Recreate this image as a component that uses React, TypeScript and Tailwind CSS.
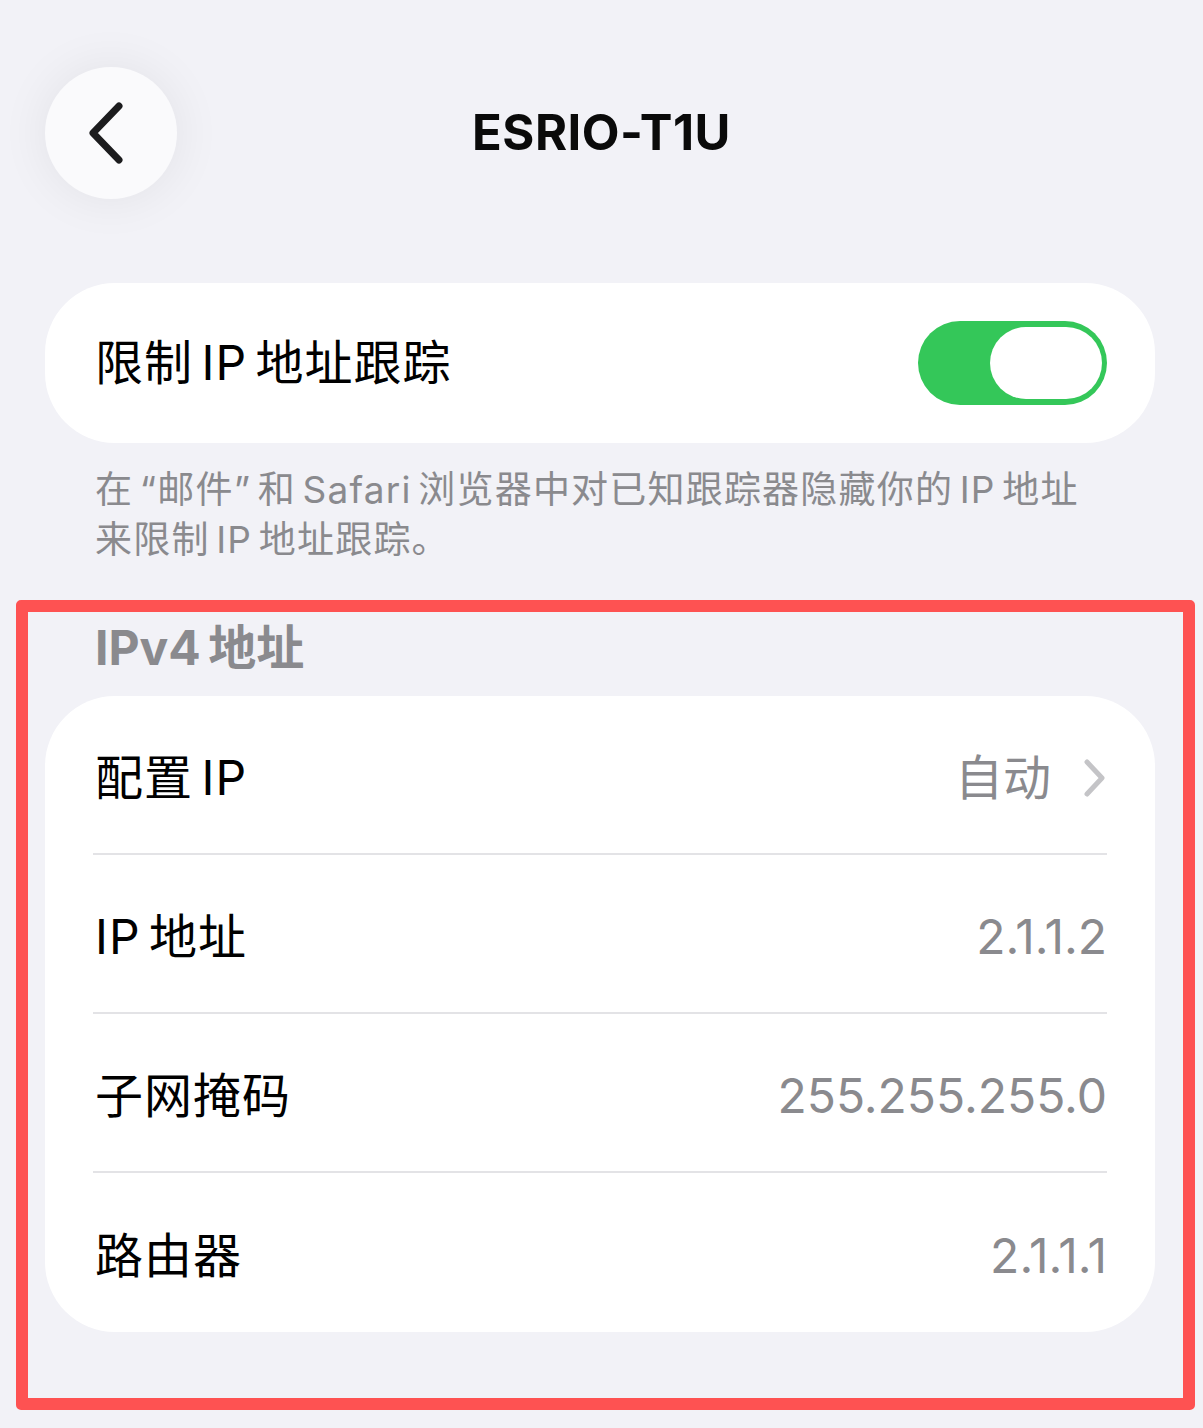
import React from 'react';

const font = { fontFamily: '"Inter", "Noto Sans CJK SC", sans-serif' };

const rows = [
  { label: '配置 IP', value: '自动', chevron: true },
  { label: 'IP 地址', value: '2.1.1.2' },
  { label: '子网掩码', value: '255.255.255.0' },
  { label: '路由器', value: '2.1.1.1' },
];

const BackIcon = () => (
  <svg width="44" height="66" viewBox="0 0 44 66" fill="none">
    <path d="M38 6 L12 33 L38 60" stroke="#1c1c1e" strokeWidth="7" strokeLinecap="round" strokeLinejoin="round" />
  </svg>
);

const Chevron = () => (
  <svg width="24" height="40" viewBox="0 0 24 40" fill="none">
    <path d="M4 4 L19 20 L4 36" stroke="#c4c4c7" strokeWidth="5" strokeLinecap="round" strokeLinejoin="round" />
  </svg>
);

const Toggle: React.FC = () => (
  <div className="flex h-[84px] w-[189px] items-center justify-end rounded-full bg-[#34c759] pr-[5px]">
    <div className="h-[72px] w-[112px] rounded-full bg-white" />
  </div>
);

const App: React.FC = () => {
  return (
    <div className="min-h-[1428px] w-full bg-[#f2f2f7] pl-[45px] pr-[48px] pt-[67px]" style={font}>
      {/* nav bar */}
      <div className="relative flex h-[132px] items-center justify-center">
        <button className="absolute left-0 top-0 flex h-[132px] w-[132px] items-center justify-center rounded-full bg-[#fafafc] shadow-[0_0_50px_rgba(0,0,0,0.07)]">
          <span className="-ml-[16px] flex">
            <BackIcon />
          </span>
        </button>
        <h1 className="ml-[3px] text-[49px] font-bold tracking-[0.5px] text-[#0a0a0a]">ESRIO-T1U</h1>
      </div>

      {/* limit IP tracking */}
      <div className="mt-[84px] flex h-[160px] items-center justify-between rounded-[70px] bg-white pl-[50px] pr-[48px]">
        <span className="text-[48px] tracking-[1px] text-black [word-spacing:-6px]">限制 IP 地址跟踪</span>
        <Toggle />
      </div>
      <p className="mt-[22px] px-[50px] text-[37px] leading-[50px] tracking-[1.2px] text-[#8a8a8e] [word-spacing:-5px]">
        在 “邮件” 和 Safari 浏览器中对已知跟踪器隐藏你的 IP 地址
        <br />
        来限制 IP 地址跟踪。
      </p>

      {/* IPv4 section (highlighted) */}
      <div className="-ml-[29px] -mr-[40px] mt-[35px] rounded-[5px] border-[12px] border-[#fe5252] pb-[66px] pl-[17px] pr-[28px] pt-[8px]">
        <h2 className="px-[50px] text-[48px] font-bold leading-[56px] text-[#8a8a8e] [word-spacing:-4px]">IPv4 地址</h2>
        <div className="mt-[20px] rounded-[70px] bg-white px-[48px]">
          {rows.map((row, i) => (
            <div
              key={row.label}
              className={`flex h-[159px] items-center justify-between pl-[2px] pt-[6px] ${i < rows.length - 1 ? 'border-b-2 border-[#e3e3e6]' : ''}`}
            >
              <span className="text-[48px] tracking-[1px] text-black [word-spacing:-6px]">{row.label}</span>
              <span className="flex items-center gap-[32px] text-[48px] text-[#8a8a8e]">
                {row.value}
                {row.chevron && <Chevron />}
              </span>
            </div>
          ))}
        </div>
      </div>
    </div>
  );
};

export default App;
